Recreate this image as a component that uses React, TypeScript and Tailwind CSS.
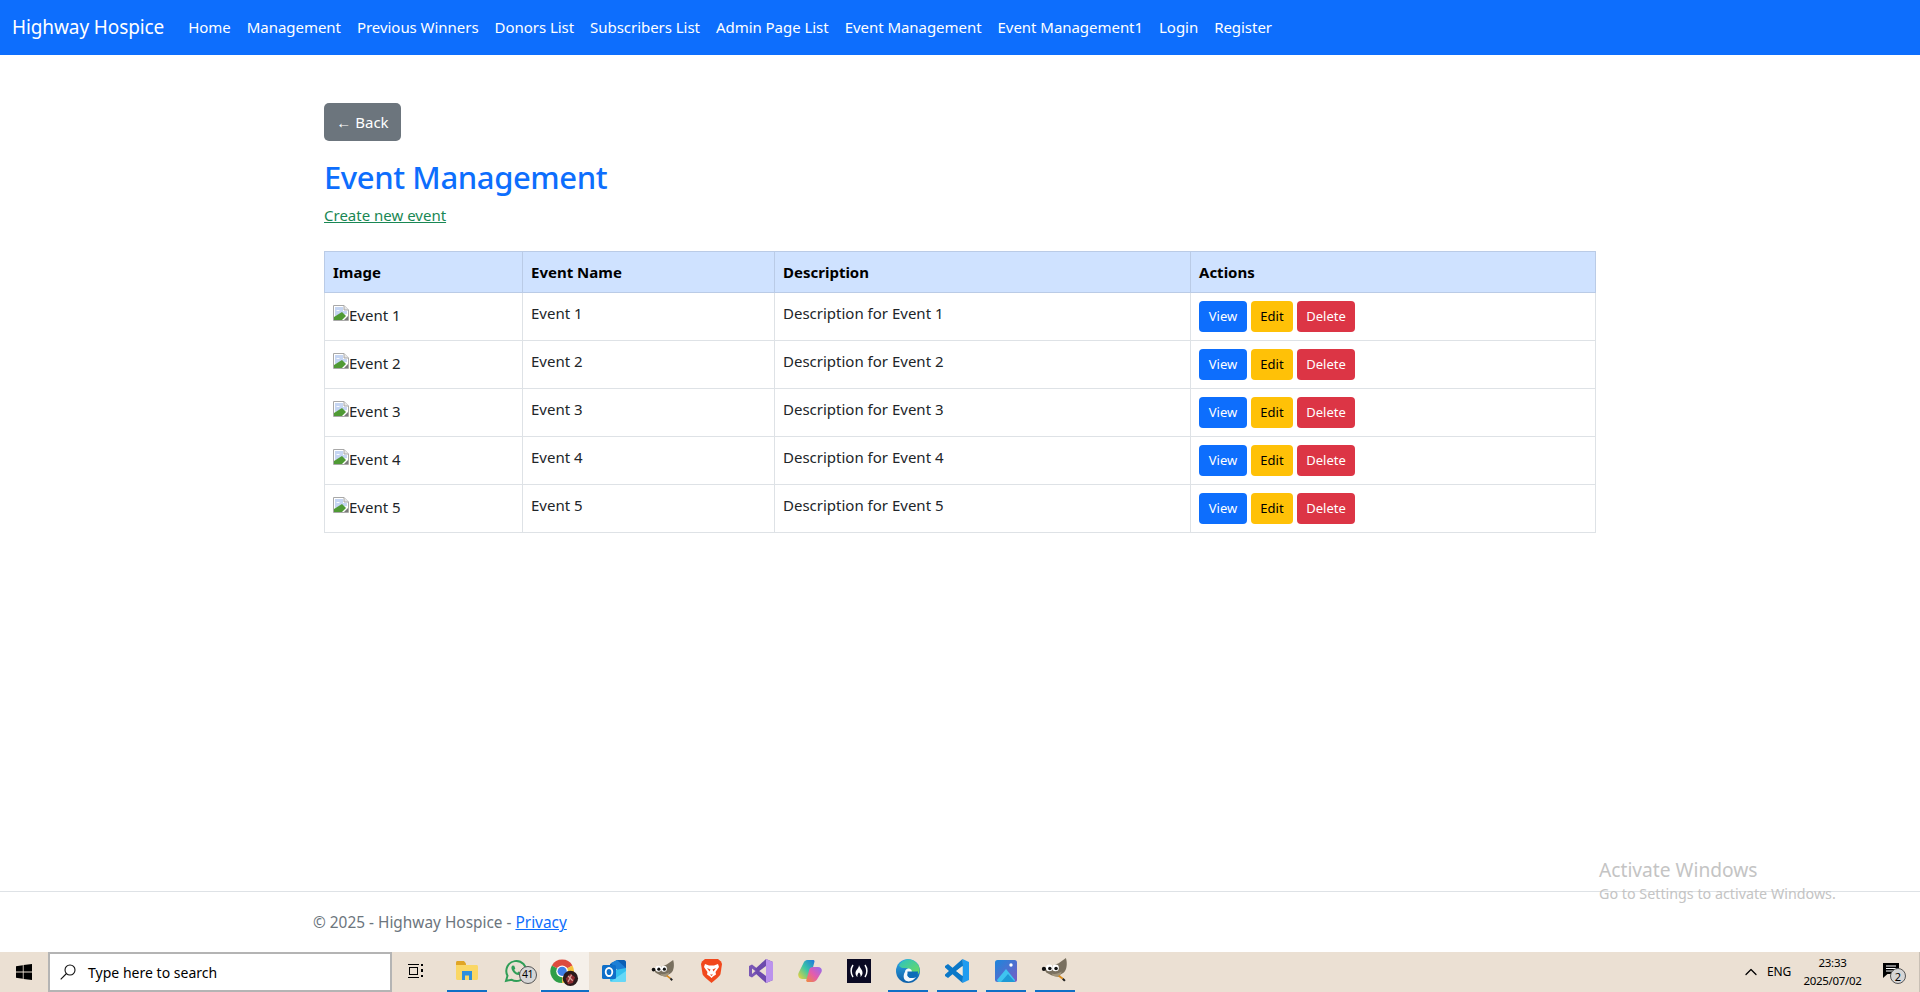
import { ChevronUp } from "lucide-react";
import type { ReactNode } from "react";

const navLinks = [
  "Home",
  "Management",
  "Previous Winners",
  "Donors List",
  "Subscribers List",
  "Admin Page List",
  "Event Management",
  "Event Management1",
  "Login",
  "Register",
];

const events = [1, 2, 3, 4, 5];

function BrokenImage() {
  return (
    <svg width="16" height="16" viewBox="0 0 16 16" className="inline-block shrink-0 align-baseline">
      <path d="M0.5 0.5H11L15.5 5V15.5H0.5Z" fill="#fff" stroke="#a8a8a8" />
      <path d="M11 0.5V5H15.5" fill="#e8e8e8" stroke="#a8a8a8" />
      <path d="M2 2H10V6H14V9L2 11Z" fill="#c5d5f2" />
      <path d="M3 6c1-1.5 3-1.5 4 0Z" fill="#fff" />
      <path d="M1 15V12L9 7L13 11L9 15Z" fill="#4f9a34" />
      <path d="M11 15L15 11V15Z" fill="#7a7a7a" />
    </svg>
  );
}

function TaskIcon({ children, underline, active }: { children: ReactNode; underline?: boolean; active?: boolean }) {
  return (
    <div className={`relative flex h-10 w-[49px] items-center justify-center pb-[3px] ${active ? "bg-[#f5f0ea]" : ""}`}>
      {children}
      {underline && <div className="absolute bottom-0 left-[5px] h-[2px] w-[40px] bg-[#0f6fc6]" />}
      {active && <div className="absolute bottom-0 left-[1px] h-[2px] w-[48px] bg-[#0f6fc6]" />}
    </div>
  );
}

function Explorer() {
  return (
    <svg width="22" height="22" viewBox="0 0 22 22">
      <path d="M0 2.5C0 1.7.6 1 1.4 1H8l2 2.5V6H0Z" fill="#e0a526" />
      <path d="M0 5H20.5C21.3 5 22 5.7 22 6.500V18.500C22 19.300 21.300 20 20.500 20H1.500C.7 20 0 19.300 0 18.500Z" fill="#fad765" />
      <path d="M6 11H16V20H13V15.500H9V20H6Z" fill="#2e8fdc" />
    </svg>
  );
}

function WhatsApp() {
  return (
    <div className="relative h-[24px] w-[24px]">
      <svg width="24" height="24" viewBox="0 0 24 24">
        <path d="M2 22l1.500-5.300A10 10 0 1 1 7.400 20.700Z" fill="none" stroke="#2f9e57" strokeWidth="2" />
        <path d="M8.500 6.500c-1.500 1-1.500 3 0 5.500 1.500 2.500 4 4 6 4 1.300 0 2.500-1 2.500-2.200l-2.500-1.300-1.200 1.200c-1.300-.5-2.500-1.700-3-3l1-1.200-1.100-2.800Z" fill="#2f9e57" />
      </svg>
      <div className="absolute -right-[9px] top-[7px] flex h-[18px] w-[18px] items-center justify-center rounded-full border border-[#555] bg-[#d6d6d6] text-[10.500px] leading-none tracking-[-0.5px] text-black">
        41
      </div>
    </div>
  );
}

function Chrome() {
  return (
    <svg width="33" height="31" viewBox="0 0 28 26" className="mt-[3px]">
      <path d="M12 12L3.300 7A10 10 0 0 1 20.700 7Z" fill="#dd4b3e" />
      <path d="M12 12L20.700 7A10 10 0 0 1 12 22Z" fill="#f5c33b" />
      <path d="M12 12L12 22A10 10 0 0 1 3.300 7Z" fill="#2f9e48" />
      <circle cx="12" cy="12" r="5" fill="#fff" />
      <circle cx="12" cy="12" r="3.900" fill="#3f7fe6" />
      <circle cx="19" cy="18" r="6.500" fill="#2a1a1c" />
      <path d="M15 18l4-4 4 3-2 5-4 1Z" fill="#8e2a30" />
      <path d="M17 16l4 4M20 15l-3 6" stroke="#d8a59b" strokeWidth="1" />
    </svg>
  );
}

function Outlook() {
  return (
    <svg width="24" height="24" viewBox="0 0 24 24">
      <path d="M8 5L15 1H22C23 1 24 2 24 3V9L8 9Z" fill="#0a5fb4" />
      <path d="M9 4L15 1L24 9V12L16 12Z" fill="#1c7fd6" />
      <path d="M8 12L24 9V21C24 22.500 23 23 22 23H10C9 23 8 22 8 21Z" fill="#34c0ee" />
      <path d="M8 23L24 12V21C24 22.500 23 23 22 23Z" fill="#65d8f7" />
      <rect x="0" y="6" width="14" height="14" rx="1.500" fill="#0f6fc9" />
      <ellipse cx="7" cy="13" rx="3.300" ry="4" fill="none" stroke="#fff" strokeWidth="1.800" />
    </svg>
  );
}

function Gimp({ size }: { size: number }) {
  return (
    <svg width={size} height={size} viewBox="0 0 26 24">
      <path d="M3 10L10 8L17 5L24 0C25.500 5 25 11 22 14C19 16.500 14 18 10 16.500L5 14Z" fill="#79705f" />
      <path d="M10 15C13 16 17 15 20 13L18 18C15 19 12 18 10 15Z" fill="#a0947c" />
      <circle cx="2.800" cy="10.500" r="2" fill="#111" />
      <circle cx="8" cy="9.500" r="3.200" fill="#fff" />
      <circle cx="8.500" cy="10" r="1.700" fill="#111" />
      <circle cx="14" cy="9.500" r="3.200" fill="#fff" />
      <circle cx="14.500" cy="10" r="1.700" fill="#111" />
      <path d="M17 17L21 20" stroke="#d88a1c" strokeWidth="1.800" />
      <path d="M21 20L23 22" stroke="#222" strokeWidth="2" />
    </svg>
  );
}

function Brave() {
  return (
    <svg width="21" height="24" viewBox="0 0 21 24">
      <path d="M4 0H17L20 2.500 21 5 19.500 15C19 17 13 22 10.500 24 8 22 2 17 1.500 15L0 5 1 2.500Z" fill="#f1481c" />
      <path d="M4 5L8 6.500H13L17 5 18 8 14.500 13 15 15.500 12 17.500 10.500 19 9 17.500 6 15.500 6.500 13 3 8Z" fill="#fff" />
      <path d="M6 9L9.500 10.500 8.500 12.500ZM15 9L11.500 10.500 12.500 12.500ZM9 15.500H12L10.500 17Z" fill="#f1481c" />
    </svg>
  );
}

function VisualStudio() {
  return (
    <svg width="24" height="24" viewBox="0 0 24 24">
      <path d="M0 7L3 5.500 9.500 10.500 7.500 13 3 9.500V15L7.500 11 9.500 13.500 3 18.500 0 17Z" fill="#7a57b5" />
      <path d="M17 0L24 3V21L17 24 5.500 13.500 9 11 17 17V7L9 13 5.500 10.500Z" fill="#6d4aad" />
      <path d="M17 0L24 3V21L17 24Z" fill="#bb92ec" />
    </svg>
  );
}

function Copilot() {
  return (
    <svg width="24" height="24" viewBox="0 0 24 24">
      <defs>
        <linearGradient id="copilotA" x1="0" y1="1" x2="1" y2="0">
          <stop offset="0" stopColor="#f5d335" />
          <stop offset="0.500" stopColor="#3cc6a4" />
          <stop offset="1" stopColor="#1c76e0" />
        </linearGradient>
        <linearGradient id="copilotB" x1="0" y1="1" x2="1" y2="0">
          <stop offset="0" stopColor="#f08a3c" />
          <stop offset="0.500" stopColor="#e25cb0" />
          <stop offset="1" stopColor="#8f6cf0" />
        </linearGradient>
      </defs>
      <path d="M6 3C7 1.500 8.500 1 10 1H15C16 1 16.500 1.500 16.500 2.500L13 16C12.500 18 11 20 8.500 20H4C1 20-.5 17 .5 14Z" fill="url(#copilotA)" />
      <path d="M15 8H20C23 8 24.500 10 23.500 13L19 20.500C18 22 16.500 23 15 23H9.500C8.500 23 8 22 8.300 21L11.500 10C12 8.800 13.500 8 15 8Z" fill="url(#copilotB)" />
    </svg>
  );
}

function FreeCodeCamp() {
  return (
    <svg width="24" height="24" viewBox="0 0 24 24">
      <rect width="24" height="24" fill="#0a0a23" />
      <path d="M6 6C3.500 9.500 3.500 14.500 6 18M18 6C20.500 9.500 20.500 14.500 18 18" fill="none" stroke="#fff" strokeWidth="1.500" />
      <path d="M12 6C12.500 9 16 11 15.500 14.500 15.200 16.500 14 17.500 13.500 18 14 16 13 14.500 12 13.500 11 14.500 10 16 10.500 18 9.500 17.500 8.500 16 8.500 14 8.500 11 12 9.500 12 6Z" fill="#fff" />
    </svg>
  );
}

function Edge() {
  return (
    <svg width="24" height="24" viewBox="0 0 24 24">
      <defs>
        <linearGradient id="edgeA" x1="0" y1="0" x2="0" y2="1">
          <stop offset="0" stopColor="#2fa9e6" />
          <stop offset="1" stopColor="#0c5ea8" />
        </linearGradient>
        <linearGradient id="edgeB" x1="0" y1="0" x2="1" y2="1">
          <stop offset="0" stopColor="#2cc2c2" />
          <stop offset="1" stopColor="#6fdc5c" />
        </linearGradient>
      </defs>
      <circle cx="12" cy="12" r="12" fill="url(#edgeA)" />
      <path d="M3 6.500C6 0 16-2 21.500 5 24.500 9 24 13 22 15H13C15 12.500 13 9 10 9 7 9 4.500 9.500 3 6.500Z" fill="url(#edgeB)" />
      <path d="M9 13C9 9.500 13 8.500 15 10.500 16 11.500 16 13 15.500 14 14 13 11 14 11.500 16.500 12 19 16 20 20 18 17.500 22 12 24 9 21 7 19 7.500 15 9 13Z" fill="#fff" opacity="0.95" />
      <path d="M11.500 12.500H22C22 15 21 17.500 20 18 16 20 12 19 11.500 16.500Z" fill="#0c6cb8" />
    </svg>
  );
}

function VsCode() {
  return (
    <svg width="24" height="24" viewBox="0 0 24 24">
      <path d="M17.500 0L24 3V21L17.500 24Z" fill="#1f9cf0" />
      <path d="M17.500 0L18 7 9 14 3 19 0 17V15.500L17.500 0Z" fill="#0a78c8" />
      <path d="M0 7V8.500L17.500 24 18 17 9 10 3 5Z" fill="#0a78c8" />
      <path d="M17.500 7V17L11 12Z" fill="#f3e9dc" />
    </svg>
  );
}

function Photos() {
  return (
    <svg width="22" height="22" viewBox="0 0 22 22">
      <defs>
        <linearGradient id="photosBg" x1="0" y1="0" x2="1" y2="1">
          <stop offset="0" stopColor="#1c86dc" />
          <stop offset="1" stopColor="#7a5cc4" />
        </linearGradient>
      </defs>
      <rect width="22" height="22" rx="2.500" fill="url(#photosBg)" />
      <circle cx="16" cy="5" r="1.700" fill="#fff" />
      <path d="M2 20L11 9 20 20C20 21 19 22 18 22H4C3 22 2 21 2 20Z" fill="#3fc4f0" />
      <path d="M6 22L13 14 20 22Z" fill="#1e9ad6" />
    </svg>
  );
}

function TaskView() {
  return (
    <svg width="16" height="16" viewBox="0 0 16 16" fill="none" stroke="#000" strokeWidth="1">
      <path d="M0 1.500H11M0 14.500H11" />
      <rect x="1.500" y="4.500" width="8" height="7" />
      <path d="M14 1V3M14 6V9M14 12V14" strokeWidth="2" />
    </svg>
  );
}

export default function App() {
  return (
    <div className="relative flex h-[992px] flex-col overflow-hidden bg-white font-['Noto_Sans',sans-serif] text-[15px] text-[#212529]">
      <nav className="flex h-[55px] items-center bg-[#0d6efd] pl-3 text-white">
        <span className="mr-[24px] text-[19px] tracking-[-0.1px]">Highway Hospice</span>
        <div className="flex gap-4">
          {navLinks.map((link) => (
            <a key={link} className="text-[15px] tracking-[-0.04px]">
              {link}
            </a>
          ))}
        </div>
      </nav>

      <main className="mx-auto w-[1272px] flex-1 pt-12">
        <button className="h-[38px] w-[77px] rounded-[5px] bg-[#6c757d] text-white">← Back</button>
        <h1 className="mt-[17px] text-[31px] leading-[38px] font-medium tracking-[-0.4px] text-[#0d6efd]">
          Event Management
        </h1>
        <a className="mt-[7px] block text-[15px] leading-6 text-[#198754] underline">Create new event</a>
        <table className="mt-[24px] w-full table-fixed border-collapse">
          <colgroup>
            <col className="w-[198px]" />
            <col className="w-[252px]" />
            <col className="w-[416px]" />
            <col />
          </colgroup>
          <thead>
            <tr className="h-[41px] bg-[#cfe2ff] text-left text-black">
              <th className="border border-[#bacbe6] px-2 font-bold">Image</th>
              <th className="border border-[#bacbe6] px-2 font-bold">Event Name</th>
              <th className="border border-[#bacbe6] px-2 font-bold">Description</th>
              <th className="border border-[#bacbe6] px-2 font-bold">Actions</th>
            </tr>
          </thead>
          <tbody>
            {events.map((n) => (
              <tr key={n} className="h-[48px]">
                <td className="border border-[#dee2e6] px-2 pt-[11px] align-top">
                  <BrokenImage />
                  <span>Event {n}</span>
                </td>
                <td className="border border-[#dee2e6] px-2 pt-[9px] align-top">Event {n}</td>
                <td className="border border-[#dee2e6] px-2 pt-[9px] align-top">Description for Event {n}</td>
                <td className="border border-[#dee2e6] px-2 align-middle">
                  <div className="flex gap-1">
                    <button className="h-[31px] w-[48px] rounded-[4px] bg-[#0d6efd] text-[13px] text-white">View</button>
                    <button className="h-[31px] w-[42px] rounded-[4px] bg-[#ffc107] text-[13px] text-black">Edit</button>
                    <button className="h-[31px] w-[58px] rounded-[4px] bg-[#dc3545] text-[13px] text-white">Delete</button>
                  </div>
                </td>
              </tr>
            ))}
          </tbody>
        </table>
      </main>

      <footer className="flex h-[61px] items-center border-t border-[#dee2e6] pl-[313px] pt-[2px] text-[15.400px] text-[#6c757d]">
        <span>
          © 2025 - Highway Hospice - <a className="text-[#0d6efd] underline">Privacy</a>
        </span>
      </footer>

      <div className="absolute left-[1599px] top-[856px] text-[#c4c4c4]">
        <div className="text-[19.200px] leading-7">Activate Windows</div>
        <div className="text-[14.300px] leading-5">Go to Settings to activate Windows.</div>
      </div>

      <div className="flex h-10 items-center bg-[#ebe0d3] text-black">
        <div className="flex w-[48px] justify-center">
          <svg width="16" height="16" viewBox="0 0 16 16" fill="#000">
            <path d="M0 2.200L6.800 1.200V7.500H0ZM7.600 1.100L16 0V7.500H7.600ZM0 8.400H6.800V14.800L0 13.800ZM7.600 8.400H16V16L7.600 14.900Z" />
          </svg>
        </div>
        <div className="flex h-10 w-[344px] items-center border-2 border-[#b4b4b4] bg-white pl-[10px] text-[14px]">
          <svg width="16" height="16" viewBox="0 0 16 16" fill="none" stroke="#111" strokeWidth="1.100">
            <circle cx="10" cy="6" r="5" />
            <path d="M6.500 9.500L0.700 15.300" />
          </svg>
          <span className="ml-[12px] tracking-[0.02px]">Type here to search</span>
        </div>
        <div className="flex w-[47px] justify-center pb-[3px]">
          <TaskView />
        </div>
        <div className="ml-[3px] flex">
          <TaskIcon underline><Explorer /></TaskIcon>
          <TaskIcon><WhatsApp /></TaskIcon>
          <TaskIcon active><Chrome /></TaskIcon>
          <TaskIcon><Outlook /></TaskIcon>
          <TaskIcon><Gimp size={24} /></TaskIcon>
          <TaskIcon><Brave /></TaskIcon>
          <TaskIcon><VisualStudio /></TaskIcon>
          <TaskIcon><Copilot /></TaskIcon>
          <TaskIcon><FreeCodeCamp /></TaskIcon>
          <TaskIcon underline><Edge /></TaskIcon>
          <TaskIcon underline><VsCode /></TaskIcon>
          <TaskIcon underline><Photos /></TaskIcon>
          <TaskIcon underline><Gimp size={27} /></TaskIcon>
        </div>
        <div className="ml-auto flex h-10 items-center border-r border-[#c9c0b5] pr-[11px] text-[12px]">
          <div className="flex w-[24px] justify-center">
            <ChevronUp size={20} strokeWidth={1.500} />
          </div>
          <div className="flex w-[32px] justify-center text-[12px] tracking-[-0.2px]">ENG</div>
          <div className="flex w-[75px] flex-col items-center text-[11.500px] leading-[18px] tracking-[-0.3px]">
            <span>23:33</span>
            <span>2025/07/02</span>
          </div>
          <div className="relative ml-[13px] flex w-[25px]">
            <svg width="16" height="15" viewBox="0 0 16 15" className="mb-[3px]">
              <path d="M0 0H16V11H4.500L0 15Z" fill="#000" />
              <path d="M3 3H13M3 5.500H13M3 8H10" stroke="#fff" strokeWidth="1" />
            </svg>
            <div className="absolute left-[7px] top-[5px] flex h-[16px] w-[16px] items-center justify-center rounded-full border border-[#555] bg-[#d6d6d6] text-[11px] leading-none">
              2
            </div>
          </div>
        </div>
      </div>
    </div>
  );
}
